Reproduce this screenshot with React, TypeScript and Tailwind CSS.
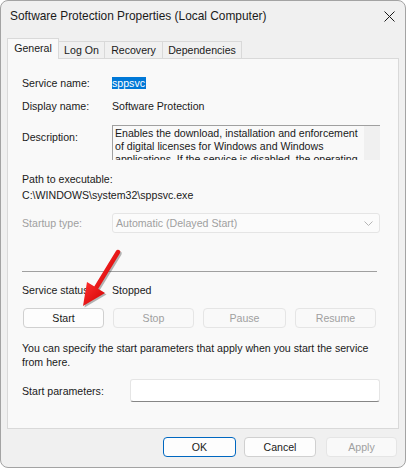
import React from 'react';

const font = { fontFamily: '"Liberation Sans", Arial, sans-serif' };

function Label(props: { children: React.ReactNode; muted?: boolean }) {
  return (
    <div className={`w-[90px] shrink-0 ${props.muted ? 'text-[#a0a0a0]' : 'text-[#1a1a1a]'}`}>{props.children}</div>
  );
}

function Btn(props: { children: React.ReactNode; disabled?: boolean; primary?: boolean; className?: string }) {
  const { children, disabled, primary, className } = props;
  return (
    <div
      className={`flex h-[20px] items-center justify-center rounded-[4px] border ${
        disabled
          ? 'border-[#e5e5e5] bg-[#f9f9f9] text-[#a0a0a0]'
          : primary
            ? 'border-[#0067c0] bg-[#fdfdfd] text-[#1a1a1a]'
            : 'border-[#d0d0d0] bg-[#fdfdfd] text-[#1a1a1a]'
      } ${className ?? ''}`}
    >
      {children}
    </div>
  );
}

export default function App() {
  return (
    <div className="h-[468px] w-[406px] bg-white text-[10.6px] leading-[16px]" style={font}>
      <div className="relative flex h-[468px] w-[406px] flex-col overflow-hidden rounded-[8px] border border-[#a3a3a3] bg-[#f0f0f0]">
        {/* title bar */}
        <div className="flex h-[29px] items-center justify-between pl-[9px] pr-[10px]">
          <div className="text-[11.9px] text-[#1a1a1a]">Software Protection Properties (Local Computer)</div>
          <svg width="11" height="11" viewBox="0 0 11 11" className="mt-[1px]">
            <path d="M0.5 0.5 L10.5 10.5 M10.5 0.5 L0.5 10.5" stroke="#1a1a1a" strokeWidth="1" />
          </svg>
        </div>

        {/* tabs */}
        <div className="mt-[8px] flex h-[20px] items-end pl-[6px]">
          <div className="relative z-10 -mb-px flex h-[21px] w-[52px] items-center justify-center border border-b-0 border-[#d9d9d9] bg-[#f9f9f9] pb-[2px] text-[#1a1a1a]">
            General
          </div>
          <div className="flex h-[17px] w-[46px] items-center justify-center border border-l-0 border-b-0 border-[#d9d9d9] bg-[#f0f0f0] text-[#1a1a1a]">
            Log On
          </div>
          <div className="flex h-[17px] w-[58px] items-center justify-center border border-l-0 border-b-0 border-[#d9d9d9] bg-[#f0f0f0] text-[#1a1a1a]">
            Recovery
          </div>
          <div className="flex h-[17px] w-[79px] items-center justify-center border border-l-0 border-b-0 border-[#d9d9d9] bg-[#f0f0f0] text-[#1a1a1a]">
            Dependencies
          </div>
        </div>

        {/* panel */}
        <div className="mx-[6px] flex h-[371px] flex-col border border-[#d9d9d9] bg-[#f9f9f9] pl-[14px] pr-[18px] text-[#1a1a1a]">
          <div className="mt-[16px] flex h-[16px] items-center">
            <Label>Service name:</Label>
            <span className="inline-block h-[12px] bg-[#0078d7] pr-[1px] leading-[12px] text-white">sppsvc</span>
          </div>
          <div className="mt-[7px] flex h-[16px] items-center">
            <Label>Display name:</Label>
            <span>Software Protection</span>
          </div>
          <div className="mt-[11px] flex h-[35px]">
            <div className="pt-[4px]">
              <Label>Description:</Label>
            </div>
            <div className="flex flex-1 overflow-hidden border-l border-t border-[#a0a0a0] bg-[#f9f9f9]">
              <div className="flex-1 overflow-hidden whitespace-nowrap pl-[2px] pt-[1px] leading-[13px]">
                Enables the download, installation and enforcement
                <br />
                of digital licenses for Windows and Windows
                <br />
                applications. If the service is disabled, the operating
              </div>
              <div className="w-[16px] shrink-0 bg-[#f0f0f0]" />
            </div>
          </div>
          <div className="mt-[11px] h-[16px]">Path to executable:</div>
          <div className="h-[16px]">C:\WINDOWS\system32\sppsvc.exe</div>
          <div className="mt-[10px] flex h-[20px] items-center">
            <Label muted>Startup type:</Label>
            <div className="flex h-[20px] flex-1 items-center justify-between rounded-[3px] border border-[#e5e5e5] bg-[#fbfbfb] pl-[3px] pr-[6px] text-[#a0a0a0]">
              <span>Automatic (Delayed Start)</span>
              <svg width="9" height="5" viewBox="0 0 9 5">
                <path d="M0.5 0.5 L4.5 4.5 L8.5 0.5" fill="none" stroke="#b5b5b5" strokeWidth="1" />
              </svg>
            </div>
          </div>
          <div className="mt-[38px] mr-[3px] h-px bg-[#a0a0a0]" />
          <div className="mt-[10px] flex h-[16px] items-center">
            <Label>Service status:</Label>
            <span>Stopped</span>
          </div>
          <div className="mt-[10px] flex gap-[9px] pl-[1px]">
            <Btn className="w-[81px]">Start</Btn>
            <Btn disabled className="w-[81px]">Stop</Btn>
            <Btn disabled className="w-[83px]">Pause</Btn>
            <Btn disabled className="w-[81px]">Resume</Btn>
          </div>
          <div className="mt-[13px] whitespace-nowrap leading-[14px]">
            You can specify the start parameters that apply when you start the service
            <br />
            from here.
          </div>
          <div className="mt-[10px] flex h-[23px] items-center">
            <div className="w-[108px] shrink-0">Start parameters:</div>
            <div className="h-[23px] flex-1 rounded-[3px] border border-[#e5e5e5] border-b-[#868686] bg-white" />
          </div>
        </div>

        {/* footer buttons */}
        <div className="mt-[8px] flex justify-end gap-[8px] pr-[8px]">
          <Btn primary className="w-[73px]">OK</Btn>
          <Btn className="w-[72px]">Cancel</Btn>
          <Btn disabled className="ml-[2px] w-[71px]">Apply</Btn>
        </div>

        {/* red arrow annotation */}
        <svg className="pointer-events-none absolute left-0 top-0" width="406" height="468" viewBox="0 0 406 468">
          <defs>
            <linearGradient id="rg" x1="0" y1="0" x2="1" y2="1">
              <stop offset="0" stopColor="#ff3030" />
              <stop offset="1" stopColor="#d00000" />
            </linearGradient>
          </defs>
          <g transform="translate(1.5,1.5)" opacity="0.35">
            <path d="M117 251 L95 287" stroke="#303030" strokeWidth="4.5" strokeLinecap="round" />
            <path d="M82 305 L86 281 L104 292 Z" fill="#303030" />
          </g>
          <path d="M117 251 L95 287" stroke="url(#rg)" strokeWidth="4.5" strokeLinecap="round" />
          <path d="M82 305 L86 281 L104 292 Z" fill="url(#rg)" />
        </svg>
      </div>
    </div>
  );
}
